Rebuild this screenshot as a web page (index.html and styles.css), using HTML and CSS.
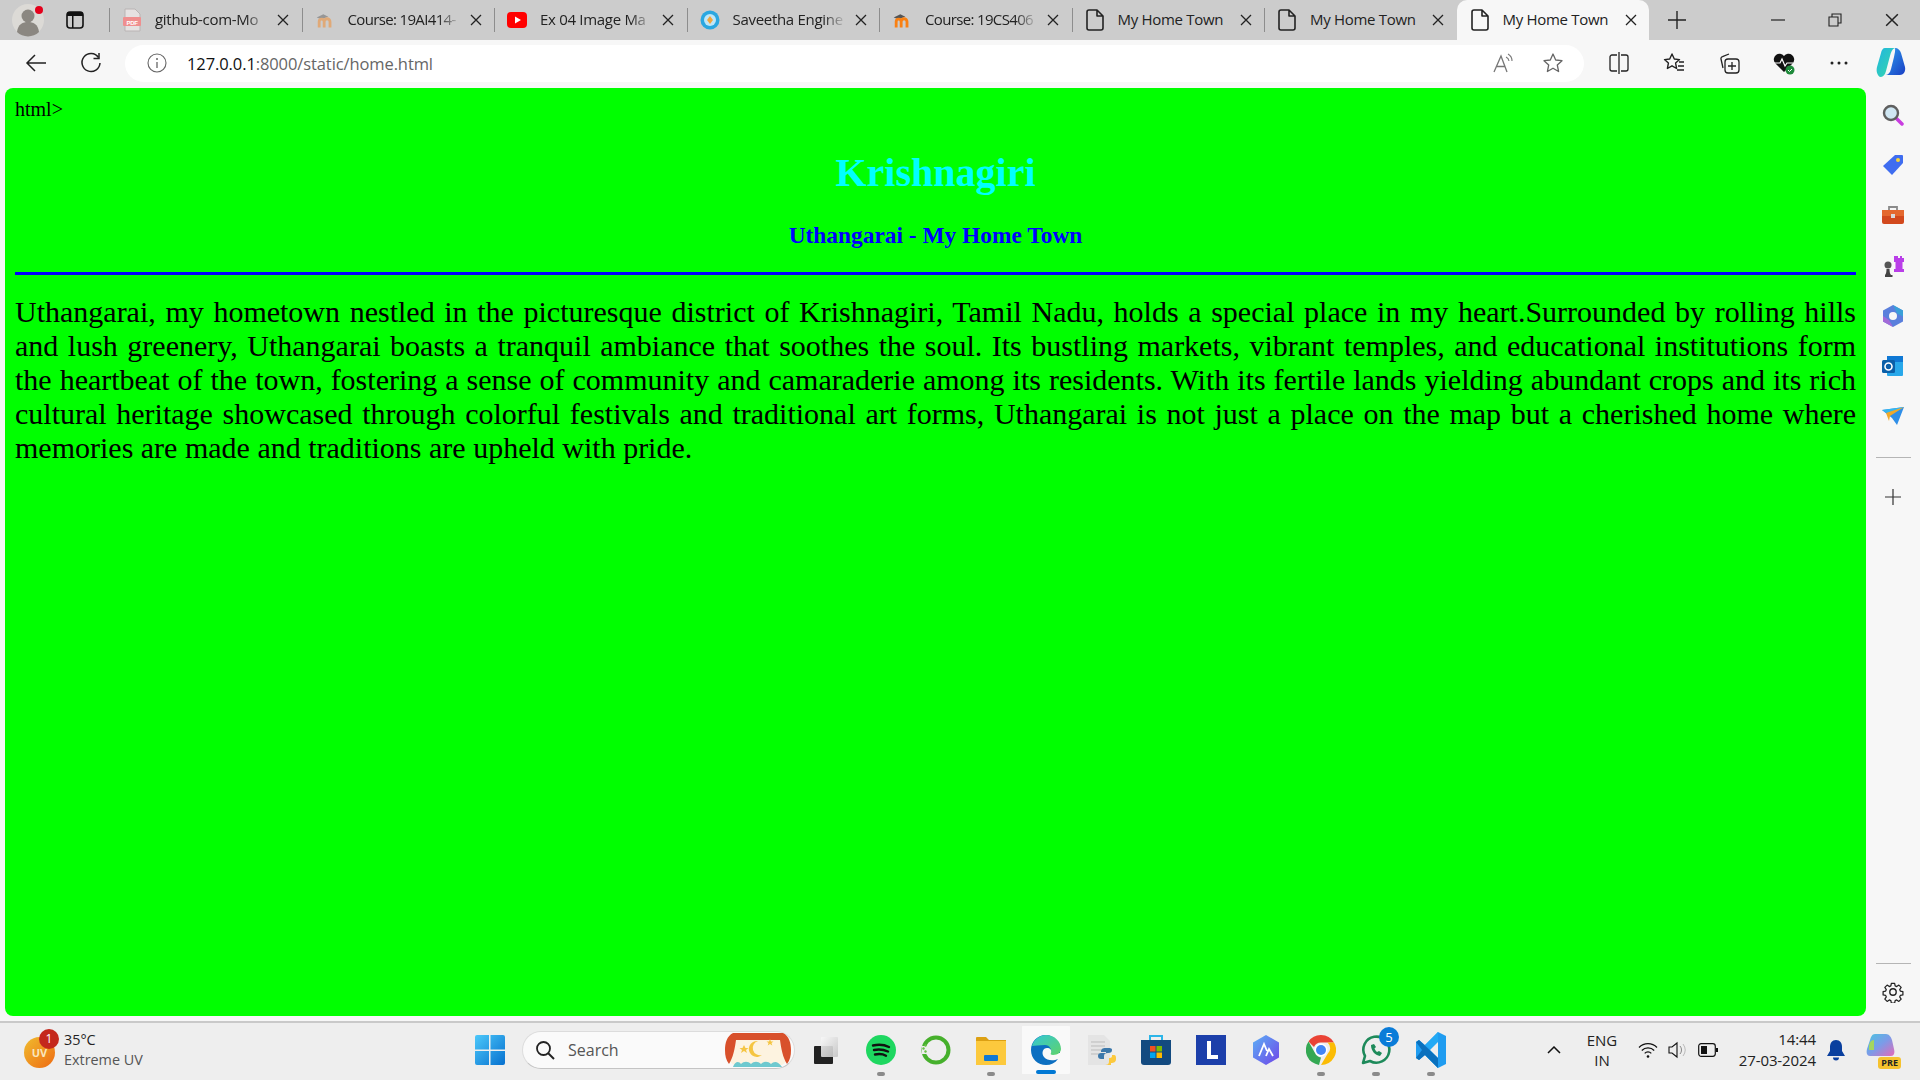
FILE: index.html
```html
<!DOCTYPE html>
<html>
<head>
    <meta charset="utf-8"/>
    <title>My Home Town</title>
    <link rel="stylesheet" href="styles.css">
</head>
<body>

<svg class="defs" width="0" height="0">
    <symbol id="doc" viewBox="0 0 20 24"><path d="M4 2h8l6 6v12a2 2 0 0 1-2 2H4a2 2 0 0 1-2-2V4a2 2 0 0 1 2-2zM12 2v6h6" fill="none" stroke="#222" stroke-width="1.6" stroke-linejoin="round"/></symbol>
    <symbol id="close" viewBox="0 0 12 12"><path d="M1 1l10 10M11 1L1 11" stroke="#222" stroke-width="1.3" fill="none"/></symbol>
    <symbol id="moodle" viewBox="0 0 24 24"><path d="M2 9l8-4 6 3-8 3z" fill="#555"/><path d="M5 21v-7a3 3 0 0 1 6 0v7M11 21v-7a3.500 3.500 0 0 1 7 0v7" fill="none" stroke="#f98012" stroke-width="3.400"/></symbol>
</svg>

<div class="tabstrip">
    <div class="profile">
        <svg width="34" height="34" viewBox="0 0 34 34"><circle cx="17" cy="17" r="16" fill="#dcdad6"/><circle cx="17" cy="13" r="6.500" fill="#8b8781"/><path d="M6 29c1-8 6-10 11-10s10 2 11 10a16 16 0 0 1-22 0z" fill="#8b8781"/></svg>
        <span class="profile-dot"></span>
    </div>
    <div class="tab-actions">
        <svg width="20" height="20" viewBox="0 0 20 20"><rect x="2" y="2" width="16" height="16" rx="3" fill="none" stroke="#111" stroke-width="1.600"/><path d="M2 6h16V4a2 2 0 0 0-2-2H4a2 2 0 0 0-2 2zM7 6h1.500v12H7z" fill="#111"/></svg>
    </div>

    <div class="tab first-tab">
        <svg class="tab-icon" width="20" height="24" viewBox="0 0 20 24"><path d="M3 1h10l5 5v17H3z" fill="#e6e2e2" stroke="#b9b4b4"/><rect x="1" y="9" width="18" height="9" rx="1" fill="#ef8f8f"/><text x="10" y="16.500" class="pdf-label">PDF</text></svg>
        <span class="tab-title">github-com-Mo</span>
        <svg class="tab-close" width="12" height="12"><use href="#close"/></svg>
    </div>
    <div class="tab">
        <svg class="tab-icon faded" width="20" height="20"><use href="#moodle"/></svg>
        <span class="tab-title tight">Course: 19AI414-</span>
        <svg class="tab-close" width="12" height="12"><use href="#close"/></svg>
    </div>
    <div class="tab">
        <svg class="tab-icon" width="20" height="16" viewBox="0 0 20 16"><rect width="20" height="16" rx="4" fill="#f00"/><path d="M8 4.500l6 3.500-6 3.500z" fill="#fff"/></svg>
        <span class="tab-title">Ex 04 Image Ma</span>
        <svg class="tab-close" width="12" height="12"><use href="#close"/></svg>
    </div>
    <div class="tab">
        <svg class="tab-icon" width="20" height="20" viewBox="0 0 20 20"><circle cx="10" cy="10" r="9.500" fill="#2aa7e0"/><circle cx="10" cy="10" r="6" fill="#bfe6f7"/><path d="M10 6l3 4-3 4-3-4z" fill="#f2a63b"/></svg>
        <span class="tab-title">Saveetha Engine</span>
        <svg class="tab-close" width="12" height="12"><use href="#close"/></svg>
    </div>
    <div class="tab">
        <svg class="tab-icon" width="20" height="20"><use href="#moodle"/></svg>
        <span class="tab-title tight">Course: 19CS406</span>
        <svg class="tab-close" width="12" height="12"><use href="#close"/></svg>
    </div>
    <div class="tab">
        <svg class="tab-icon" width="20" height="24"><use href="#doc"/></svg>
        <span class="tab-title solid">My Home Town</span>
        <svg class="tab-close" width="12" height="12"><use href="#close"/></svg>
    </div>
    <div class="tab">
        <svg class="tab-icon" width="20" height="24"><use href="#doc"/></svg>
        <span class="tab-title solid">My Home Town</span>
        <svg class="tab-close" width="12" height="12"><use href="#close"/></svg>
    </div>
    <div class="tab active">
        <svg class="tab-icon" width="20" height="24"><use href="#doc"/></svg>
        <span class="tab-title solid">My Home Town</span>
        <svg class="tab-close" width="12" height="12"><use href="#close"/></svg>
    </div>

    <div class="new-tab">
        <svg width="18" height="18" viewBox="0 0 18 18"><path d="M9 0v18M0 9h18" stroke="#222" stroke-width="1.400"/></svg>
    </div>

    <div class="window-controls">
        <div class="win-btn"><svg width="14" height="14" viewBox="0 0 14 14"><path d="M0 7h14" stroke="#222" stroke-width="1.200"/></svg></div>
        <div class="win-btn"><svg width="14" height="14" viewBox="0 0 14 14"><path d="M1 4h9v9H1zM4 4V1h9v9h-3" fill="none" stroke="#222" stroke-width="1.100"/></svg></div>
        <div class="win-btn"><svg width="14" height="14"><use href="#close"/></svg></div>
    </div>
</div>

<div class="toolbar">
    <div class="tool">
        <svg width="22" height="22" viewBox="0 0 22 22"><path d="M21 11H2M10 3l-8 8 8 8" fill="none" stroke="#222" stroke-width="1.500"/></svg>
    </div>
    <div class="tool">
        <svg width="22" height="22" viewBox="0 0 22 22"><path d="M18.500 5.500A9 9 0 1 0 20 11" fill="none" stroke="#222" stroke-width="1.500"/><path d="M19 1v5.500h-5.500" fill="none" stroke="#222" stroke-width="1.500"/></svg>
    </div>

    <div class="address">
        <div class="addr-info">
            <svg width="20" height="20" viewBox="0 0 20 20"><circle cx="10" cy="10" r="9" fill="none" stroke="#666" stroke-width="1.100"/><path d="M10 9v6" stroke="#666" stroke-width="1.300"/><circle cx="10" cy="6" r="1" fill="#666"/></svg>
        </div>
        <div class="url"><span class="host">127.0.0.1</span>:8000/static/home.html</div>
        <div class="addr-tool">
            <svg width="22" height="22" viewBox="0 0 22 22"><path d="M1 20L8 4l6 16M3.500 14.500h9" fill="none" stroke="#777" stroke-width="1.300"/><path d="M13 5a5 5 0 0 1 3 4M15 2a8 8 0 0 1 4 7" fill="none" stroke="#777" stroke-width="1.100"/></svg>
        </div>
        <div class="addr-tool">
            <svg width="22" height="22" viewBox="0 0 22 22"><path d="M11 2l2.700 6 6.300.7-4.700 4.300 1.300 6.500-5.600-3.300-5.600 3.300 1.300-6.500L2 8.700 8.300 8z" fill="none" stroke="#666" stroke-width="1.300" stroke-linejoin="round"/></svg>
        </div>
    </div>

    <div class="tool first-right">
        <svg width="22" height="22" viewBox="0 0 22 22"><path d="M9 3H4a2 2 0 0 0-2 2v12a2 2 0 0 0 2 2h5M13 3h5a2 2 0 0 1 2 2v12a2 2 0 0 1-2 2h-5M11 0v22" fill="none" stroke="#222" stroke-width="1.300"/></svg>
    </div>
    <div class="tool">
        <svg width="24" height="24" viewBox="0 0 24 24"><path d="M10 3l2.300 5 5.200.6-3.900 3.500 1 5.400-4.600-2.700-4.600 2.700 1-5.400L2.500 8.600 7.700 8z" fill="none" stroke="#222" stroke-width="1.400" stroke-linejoin="round"/><path d="M17 11h5M16 15h6M15 19h7" stroke="#222" stroke-width="1.300"/></svg>
    </div>
    <div class="tool">
        <svg width="24" height="24" viewBox="0 0 24 24"><path d="M6 17l-2-9a2 2 0 0 1 1.500-2.400L12 3" fill="none" stroke="#222" stroke-width="1.300"/><rect x="8" y="8" width="14" height="14" rx="3" fill="none" stroke="#222" stroke-width="1.300"/><path d="M15 11v8M11 15h8" stroke="#222" stroke-width="1.300"/></svg>
    </div>
    <div class="tool">
        <svg width="24" height="24" viewBox="0 0 24 24"><path d="M12 21L3 12a5.500 5.500 0 0 1 9-7 5.500 5.500 0 0 1 9 7z" fill="#111"/><path d="M2 12h6l2-4 3 7 2-3h6" fill="none" stroke="#fff" stroke-width="1.200"/><circle cx="18" cy="19" r="4.500" fill="#1f8a3b"/><path d="M16 19l1.500 1.500L20 18" fill="none" stroke="#fff"/></svg>
    </div>
    <div class="tool">
        <svg width="18" height="4" viewBox="0 0 18 4"><circle cx="2" cy="2" r="1.500" fill="#222"/><circle cx="9" cy="2" r="1.500" fill="#222"/><circle cx="16" cy="2" r="1.500" fill="#222"/></svg>
    </div>
    <div class="tool copilot">
        <svg width="30" height="32" viewBox="0 0 30 32"><defs><linearGradient id="copA" x1="0" y1="0" x2="1" y2="1"><stop offset="0" stop-color="#1fb6e0"/><stop offset="1" stop-color="#3ad9a8"/></linearGradient><linearGradient id="copB" x1="0" y1="0" x2="1" y2="1"><stop offset="0" stop-color="#2fa0f0"/><stop offset="1" stop-color="#1a3fc4"/></linearGradient></defs><path d="M9 1h10c-3 1-4 4-5 8l-4 15c-1 4-3 6-6 6-3-2-4-6-3-10L5 6c.5-3 2-5 4-5z" fill="url(#copA)"/><path d="M19 1c3 0 5 2 6 5l4 14c1 5-2 8-5 8H9c3 0 5-2 6-6l3-12c.7-3 1.500-7 1-9z" fill="url(#copB)"/></svg>
    </div>
</div>

<div class="middle">
    <div class="page">
        html&gt;
        <h1 class="town">Krishnagiri</h1>
        <h3 class="subtitle">Uthangarai - My Home Town</h3>
        <hr class="rule">
        <p class="about">Uthangarai, my hometown nestled in the picturesque district of Krishnagiri, Tamil Nadu, holds a special place in my heart.Surrounded by rolling hills and lush greenery, Uthangarai boasts a tranquil ambiance that soothes the soul. Its bustling markets, vibrant temples, and educational institutions form the heartbeat of the town, fostering a sense of community and camaraderie among its residents. With its fertile lands yielding abundant crops and its rich cultural heritage showcased through colorful festivals and traditional art forms, Uthangarai is not just a place on the map but a cherished home where memories are made and traditions are upheld with pride.</p>
    </div>

    <div class="sidebar">
        <div class="side-item">
            <svg width="22" height="22" viewBox="0 0 22 22"><path d="M13 13l7 7" stroke="#c93de0" stroke-width="3.500" stroke-linecap="round"/><circle cx="9" cy="9" r="7" fill="#cfe6f2" stroke="#5f5f5f" stroke-width="2.400"/></svg>
        </div>
        <div class="side-item">
            <svg width="22" height="22" viewBox="0 0 22 22"><path d="M13 1h7a1 1 0 0 1 1 1v7L10 21 1 12z" fill="#3f6df0"/><circle cx="16" cy="6" r="2" fill="#f5d33c"/></svg>
        </div>
        <div class="side-item">
            <svg width="24" height="22" viewBox="0 0 24 22"><path d="M8 6V3h8v3" fill="none" stroke="#8a8a8a" stroke-width="1.800"/><rect x="1" y="6" width="22" height="14" rx="2" fill="#d2491d"/><rect x="1" y="6" width="22" height="6" fill="#e4682e"/><rect x="10" y="10" width="4" height="4" fill="#d9d9d9"/></svg>
        </div>
        <div class="side-item">
            <svg width="24" height="24" viewBox="0 0 24 24"><path d="M15 2h2v2h2V2h2v2h2v4h-1.500v7H23v3H13v-3h1.500V8H13V2z" fill="#b93ee8"/><circle cx="7" cy="11" r="3.500" fill="#555"/><path d="M4 23v-2c1-1 1.500-3 1.500-6h3c0 3 .5 5 1.500 6h1.500v2z" fill="#444"/></svg>
        </div>
        <div class="side-item">
            <svg width="22" height="24" viewBox="0 0 22 24"><path d="M11 1l10 5.500v11L11 23 1 17.500v-11z" fill="#5a7fdc"/><path d="M11 1l10 5.500v6l-6-3z" fill="#3aa0d8"/><path d="M1 12l6 4 4 7-10-5.500z" fill="#a36ad8"/><circle cx="11" cy="12" r="4" fill="#f7f7f7"/></svg>
        </div>
        <div class="side-item">
            <svg width="22" height="22" viewBox="0 0 22 22"><rect x="5" y="1" width="16" height="20" rx="1" fill="#28a8ea"/><rect x="5" y="1" width="16" height="6" fill="#0f78d4"/><rect x="0" y="5" width="13" height="13" rx="1.500" fill="#0a5fa8"/><circle cx="6.500" cy="11.500" r="3.500" fill="none" stroke="#fff" stroke-width="1.600"/></svg>
        </div>
        <div class="side-item">
            <svg width="24" height="18" viewBox="0 0 24 18"><path d="M1 3l22-3-7 18-5-7z" fill="#2f8fe8"/><path d="M1 3l22-3L9 8z" fill="#35b6f0"/><path d="M5 6l18-6L9 9 8 14z" fill="#f0a92b"/></svg>
        </div>
        <div class="side-rule"></div>
        <div class="side-item">
            <svg width="16" height="16" viewBox="0 0 16 16"><path d="M8 0v16M0 8h16" stroke="#333" stroke-width="1.200"/></svg>
        </div>
        <div class="side-spacer"></div>
        <div class="side-rule low"></div>
        <div class="side-item">
            <svg width="22" height="22" viewBox="0 0 24 24"><path d="M10 1.500h4l.6 3.100 1.900.8 2.600-1.800 2.800 2.800-1.800 2.600.8 1.900 3.100.6v4l-3.100.6-.8 1.900 1.800 2.600-2.800 2.800-2.600-1.800-1.900.8-.6 3.100h-4l-.6-3.100-1.900-.8-2.600 1.800-2.800-2.800 1.800-2.600-.8-1.900-3.100-.6v-4l3.100-.6.8-1.900-1.800-2.600 2.800-2.800 2.600 1.800 1.900-.8z" transform="translate(1.200 1.200) scale(.9)" fill="none" stroke="#222" stroke-width="1.500" stroke-linejoin="round"/><circle cx="12" cy="12" r="3.500" fill="none" stroke="#222" stroke-width="1.500"/></svg>
        </div>
    </div>
</div>

<div class="taskbar">
    <div class="weather">
        <div class="uv">
            <span class="uv-label">UV</span>
            <span class="uv-badge">1</span>
        </div>
        <div class="weather-text">
            <div class="temp">35°C</div>
            <div class="cond">Extreme UV</div>
        </div>
    </div>

    <div class="task-icon">
        <svg width="30" height="30" viewBox="0 0 30 30"><defs><linearGradient id="winGrad" x1="0" y1="0" x2="1" y2="1"><stop offset="0" stop-color="#4cc8fa"/><stop offset="1" stop-color="#0670cf"/></linearGradient></defs><path d="M0 2a2 2 0 0 1 2-2h12v14.500H0zM15.500 0H28a2 2 0 0 1 2 2v12.500H15.500zM0 16h14v14H2a2 2 0 0 1-2-2zM15.500 16H30v12a2 2 0 0 1-2 2H15.500z" fill="url(#winGrad)"/></svg>
    </div>

    <div class="search">
        <svg width="20" height="20" viewBox="0 0 20 20"><circle cx="8.500" cy="8.500" r="6.500" fill="none" stroke="#222" stroke-width="1.800"/><path d="M13 13l6 6" stroke="#222" stroke-width="2"/></svg>
        <span class="search-label">Search</span>
        <svg width="66" height="34" viewBox="0 0 66 34"><rect width="66" height="34" rx="17" fill="#fdf3e0"/><path d="M8 0h50c6 3 8 10 8 17 0 6-1 10-4 14-4-6-6-16-7-24H11c-1 8-3 18-7 24-3-4-4-8-4-14C0 10 2 3 8 0z" fill="#d8502b"/><path d="M8 34c2-6 6-6 8-3 3-3 7-3 10 0 3-3 7-3 10 0 3-3 7-3 10 0 3-3 7-3 11 3z" fill="#6fc9cf"/><path d="M33 8a8 8 0 1 0 4 14 7 7 0 0 1-4-14z" fill="#f5c542"/><path d="M19 12l1.500 3h3l-2.500 2 1 3-3-2-3 2 1-3-2.500-2h3zM45 6l1 2.500h2.500l-2 1.500.8 2.500-2.300-1.500-2.300 1.500.8-2.500-2-1.500H44z" fill="#f5c542"/></svg>
    </div>

    <div class="task-icon after-search">
        <svg width="24" height="28" viewBox="0 0 24 28"><defs><linearGradient id="tvGrad" x1="0" y1="0" x2="1" y2="1"><stop offset="0" stop-color="#f8f8f8"/><stop offset="1" stop-color="#c4c4c4"/></linearGradient></defs><rect x="0" y="10" width="19" height="18" rx="1" fill="#222"/><rect x="7" y="1" width="17" height="20" rx="1" fill="url(#tvGrad)" opacity=".9"/></svg>
    </div>
    <div class="task-icon running">
        <svg width="30" height="30" viewBox="0 0 30 30"><circle cx="15" cy="15" r="15" fill="#1ed760"/><path d="M7 10.500c6-1.500 11-1 16 1.500M8 15c5-1 9-.8 14 1.500M9 19.500c4-.8 8-.5 11 1.200" fill="none" stroke="#111" stroke-width="2.400" stroke-linecap="round"/></svg>
    </div>
    <div class="task-icon">
        <svg width="30" height="30" viewBox="0 0 30 30"><circle cx="15" cy="15" r="12.500" fill="none" stroke="#46b02c" stroke-width="4"/><path d="M1 11h5v8H1z" fill="#eee"/><path d="M2 12l2 1-1 2-2-1zM4 15l2 1-1 2-2-1zM4 9l2 1-1 2-2-1z" fill="#6cc24a"/></svg>
    </div>
    <div class="task-icon running">
        <svg width="30" height="30" viewBox="0 0 30 30"><path d="M0 3a1 1 0 0 1 1-1h9l3 3h17v8H0z" fill="#dca013"/><rect y="6" width="30" height="24" fill="#fcc93d"/><rect x="8" y="20" width="14" height="6" rx="1" fill="#0f78d4"/></svg>
    </div>
    <div class="task-icon current">
        <svg width="32" height="32" viewBox="0 0 32 32"><defs><linearGradient id="edgeGrad" x1="0" y1="0" x2="1" y2="1"><stop offset="0" stop-color="#33c6d6"/><stop offset="1" stop-color="#5fd36a"/></linearGradient></defs><path d="M16 1C7 1 1 8 1 16c0 9 7 15 15 15 5 0 9-2 12-6-4 2-11 2-14-2-3-4-1-9 3-9 3 0 5 2 5 5h8c1-10-6-18-14-18z" fill="#0c6fc1"/><path d="M2 12C4 5 10 1 16 1c9 0 15 7 15 14 0 3-3 6-8 6-2 0-3-1-2-2 1-3-1-8-6-8-6 0-10 1-13 1z" fill="url(#edgeGrad)"/></svg>
        <span class="run-mark"></span>
    </div>
    <div class="task-icon">
        <svg width="30" height="32" viewBox="0 0 30 32"><path d="M2 1h16l6 6v24H2z" fill="#e4e4e4"/><path d="M5 8h14M5 12h14M5 16h10M5 20h8" stroke="#bbb"/><path d="M20 14c-4 0-5 1-5 4h5v1h-5c-2 0-3 1-3 3s1 3 3 3h3v-3c0-2 1-3 4-3s4-1 4-3-2-2-6-2z" fill="#3c78aa"/><path d="M18 31c4 0 5-1 5-4v-3c3 0 3-1 3-3h2c2 0 2 2 2 4 0 3-2 4-5 4v2h-7z" fill="#fcc93d"/></svg>
    </div>
    <div class="task-icon">
        <svg width="30" height="32" viewBox="0 0 30 32"><path d="M9 7V2h12v5" fill="none" stroke="#2cb5e8" stroke-width="2"/><path d="M0 6h30v22a3 3 0 0 1-3 3H3a3 3 0 0 1-3-3z" fill="#134a80"/><rect x="9" y="12" width="5.500" height="5.500" fill="#f25022"/><rect x="15.500" y="12" width="5.500" height="5.500" fill="#7fba00"/><rect x="9" y="18.500" width="5.500" height="5.500" fill="#00a4ef"/><rect x="15.500" y="18.500" width="5.500" height="5.500" fill="#ffb900"/></svg>
    </div>
    <div class="task-icon">
        <svg width="30" height="30" viewBox="0 0 30 30"><rect width="30" height="30" fill="#1c3faa"/><path d="M11 6h4v14h7v4H11z" fill="#fff"/></svg>
    </div>
    <div class="task-icon">
        <svg width="30" height="32" viewBox="0 0 30 32"><defs><linearGradient id="hexGrad" x1="0" y1="0" x2="1" y2="1"><stop offset="0" stop-color="#5bb0f5"/><stop offset="1" stop-color="#6f45e8"/></linearGradient></defs><path d="M15 1l13 7.500v15L15 31 2 23.500v-15z" fill="url(#hexGrad)"/><path d="M8 22l5-12 3 7M15 22l3-7 4 7" fill="none" stroke="#fff" stroke-width="1.800"/></svg>
    </div>
    <div class="task-icon running">
        <svg width="30" height="30" viewBox="0 0 30 30"><path d="M15 0a15 15 0 0 1 13 7.500H15a7.500 7.500 0 0 0-7 4.500L2.500 6.500A15 15 0 0 1 15 0z" fill="#ea4335"/><path d="M28 7.500A15 15 0 0 1 15 30l6.500-11a7.500 7.500 0 0 0 0-11.500z" fill="#fbbc05"/><path d="M2.500 6.500L9 18a7.500 7.500 0 0 0 6 4.500l-2 7.400A15 15 0 0 1 2.500 6.500z" fill="#34a853"/><circle cx="15" cy="15" r="6.500" fill="#fff"/><circle cx="15" cy="15" r="5" fill="#4285f4"/></svg>
    </div>
    <div class="task-icon running">
        <svg width="32" height="32" viewBox="0 0 32 32"><path d="M3 29l2-7a13 13 0 1 1 5 5z" fill="none" stroke="#1d8a5a" stroke-width="2.600" stroke-linejoin="round"/><path d="M11 11c0 6 4 10 9 11l2-3-3-2-2 1c-1-1-2-2-2.500-3.500l1.500-1.500-2-3z" fill="#1d8a5a"/></svg>
        <span class="count-badge">5</span>
    </div>
    <div class="task-icon running">
        <svg width="30" height="36" viewBox="0 0 30 36"><path d="M22 0l8 4v28l-8 4-13-13-6 5-3-2v-16l3-2 6 5z" fill="#1f9cf0"/><path d="M22 0v36l-13-13 6-5-6-5z" fill="#22a9f5"/><path d="M22 10l-8 8 8 8z" fill="#eee"/><path d="M0 10l3-2 19 18v10L9 23l-6 5-3-2 6-8z" fill="#0a70bd"/></svg>
    </div>

    <div class="tray">
        <div class="tray-chevron">
            <svg width="14" height="8" viewBox="0 0 14 8"><path d="M1 7l6-6 6 6" fill="none" stroke="#111" stroke-width="1.500"/></svg>
        </div>
        <div class="lang"><div>ENG</div><div>IN</div></div>
        <div class="tray-icon first-tray">
            <svg width="20" height="16" viewBox="0 0 20 16"><path d="M1 5.500a12.500 12.500 0 0 1 18 0M3.800 8.500a8.500 8.500 0 0 1 12.400 0M6.700 11.300a4.500 4.500 0 0 1 6.600 0" fill="none" stroke="#111" stroke-width="1.200"/><circle cx="10" cy="14.500" r="1.300" fill="#111"/></svg>
        </div>
        <div class="tray-icon">
            <svg width="20" height="18" viewBox="0 0 20 18"><path d="M1 6h3l5-4v14l-5-4H1z" fill="none" stroke="#111" stroke-width="1.100"/><path d="M12 5a6 6 0 0 1 0 8" fill="none" stroke="#888"/><path d="M15 3a10 10 0 0 1 0 12" fill="none" stroke="#bbb"/></svg>
        </div>
        <div class="tray-icon">
            <svg width="20" height="14" viewBox="0 0 20 14"><rect x=".7" y=".7" width="16.600" height="12.600" rx="2.500" fill="none" stroke="#111" stroke-width="1.200"/><rect x="3" y="3" width="6" height="8" fill="#111"/><rect x="18" y="5" width="2" height="4" fill="#111"/></svg>
        </div>
        <div class="clock"><div>14:44</div><div>27-03-2024</div></div>
        <div class="tray-bell">
            <svg width="18" height="22" viewBox="0 0 18 22"><path d="M9 1c-4 0-6 3-6 7v4l-3 5h18l-3-5V8c0-4-2-7-6-7z" fill="#0a3f9e"/><path d="M6 18.500a3 3 0 0 0 6 0z" fill="#0a3f9e"/></svg>
        </div>
        <div class="tray-copilot">
            <svg width="30" height="34" viewBox="0 0 30 34"><defs><linearGradient id="preGrad" x1="0" y1="0" x2="1" y2="1"><stop offset="0" stop-color="#4ac4e0"/><stop offset=".5" stop-color="#7c9be8"/><stop offset="1" stop-color="#e46ab8"/></linearGradient></defs><path d="M9 1h11c3 0 5 3 6 6l2 9c1 4 0 7-3 7H4c-3 0-4-3-3-7l3-9c1-3 2-6 5-6z" fill="url(#preGrad)"/><path d="M3 14c0-4 2-7 5-7v10H3z" fill="#a4d65e"/></svg>
            <span class="pre-badge">PRE</span>
        </div>
    </div>
</div>

</body>
</html>
```

FILE: styles.css
```css
* {
    box-sizing: border-box;
}

html, body {
    margin: 0;
    height: 100%;
    overflow: hidden;
}

body {
    display: flex;
    flex-direction: column;
    height: 1080px;
    background: #f7f7f7;
    font-family: "Open Sans", "Noto Sans", sans-serif;
    color: #222;
}

.defs {
    display: block;
    height: 0;
}

/* tab strip */

.tabstrip {
    display: flex;
    flex: none;
    align-items: stretch;
    height: 40px;
    background: #cccccc;
}

.profile {
    position: relative;
    display: flex;
    align-items: center;
    justify-content: center;
    width: 56px;
}

.profile-dot {
    position: absolute;
    top: 6px;
    left: 35px;
    width: 8px;
    height: 8px;
    border-radius: 50%;
    background: #e4001b;
}

.tab-actions {
    display: flex;
    align-items: center;
    justify-content: center;
    width: 38px;
}

.tab {
    display: flex;
    align-items: center;
    width: 192.5px;
    font-size: 15px;
    letter-spacing: -0.3px;
}

.first-tab {
    margin-left: 15px;
}

.tab::before {
    content: "";
    flex: none;
    width: 1px;
    height: 24px;
    background: #8d8d8d;
}

.tab.active {
    background: #f7f7f7;
    border-radius: 10px 10px 0 0;
}

.tab.active::before {
    background: transparent;
}

.tab-icon {
    flex: none;
    margin-left: 12px;
    margin-right: 13px;
}

.tab-icon.faded {
    opacity: 0.45;
}

.pdf-label {
    font-family: "Liberation Sans", sans-serif;
    font-size: 6px;
    font-weight: bold;
    fill: #fff;
    text-anchor: middle;
}

.tab-title {
    flex: none;
    width: 110px;
    padding-bottom: 2px;
    overflow: hidden;
    white-space: nowrap;
    -webkit-mask-image: linear-gradient(to right, #000 82%, rgba(0, 0, 0, 0.15));
    mask-image: linear-gradient(to right, #000 82%, rgba(0, 0, 0, 0.15));
}

.tab-title.tight {
    letter-spacing: -0.65px;
}

.tab-title.solid {
    -webkit-mask-image: none;
    mask-image: none;
}

.tab-close {
    flex: none;
    margin-left: 12px;
}

.new-tab {
    display: flex;
    align-items: center;
    justify-content: center;
    width: 56px;
}

.window-controls {
    display: flex;
    margin-left: auto;
}

.win-btn {
    display: flex;
    align-items: center;
    justify-content: center;
    width: 57px;
}

/* address bar row */

.toolbar {
    display: flex;
    flex: none;
    align-items: center;
    height: 48px;
    padding-left: 8px;
    padding-bottom: 2px;
}

.tool {
    display: flex;
    flex: none;
    align-items: center;
    justify-content: center;
    width: 55px;
    height: 37px;
}

.first-right {
    margin-left: 7px;
}

.copilot {
    width: 50px;
}

.address {
    display: flex;
    align-items: center;
    width: 1459px;
    height: 37px;
    margin-left: 7px;
    padding-left: 20px;
    padding-right: 7px;
    border-radius: 19px;
    background: #fff;
}

.addr-info {
    display: flex;
    justify-content: center;
    width: 24px;
}

.url {
    flex: 1;
    margin-left: 18px;
    font-size: 16.5px;
    letter-spacing: -0.1px;
    color: #666;
}

.host {
    color: #111;
}

.addr-tool {
    display: flex;
    justify-content: center;
    width: 49px;
}

/* page and sidebar */

.middle {
    display: flex;
    flex: 1;
    min-height: 0;
}

.page {
    width: 1861px;
    height: 928px;
    margin-left: 5px;
    padding: 10px 10px 8px 10px;
    border-radius: 8px;
    background: #00ff00;
    color: #000;
    font-family: "Liberation Serif", "Times New Roman", serif;
    font-size: 20px;
}

.town {
    margin: 28px 0 0 0;
    color: #00ffff;
    font-size: 40px;
    font-weight: bold;
    text-align: center;
}

.subtitle {
    margin: 26px 0 0 0;
    color: #0000ff;
    font-size: 23.4px;
    font-weight: bold;
    text-align: center;
}

.rule {
    height: 3px;
    margin: 23px 0 0 0;
    border: none;
    background: #0000ff;
}

.about {
    margin: 20px 0 0 0;
    font-size: 30px;
    line-height: 34px;
    text-align: justify;
}

.sidebar {
    display: flex;
    flex: 1;
    flex-direction: column;
    align-items: center;
    padding-top: 1.5px;
    padding-bottom: 4px;
}

.side-item {
    display: flex;
    flex: none;
    align-items: center;
    justify-content: center;
    width: 100%;
    height: 50.3px;
}

.side-rule {
    flex: none;
    width: 35px;
    height: 1px;
    margin: 15px 0 14px;
    background: #b5b5b5;
}

.side-rule.low {
    margin: 0 0 3px;
}

.side-spacer {
    flex: 1;
}

/* taskbar */

.taskbar {
    display: flex;
    flex: none;
    align-items: center;
    height: 59px;
    padding-bottom: 3px;
    border-top: 2px solid #c9c9c9;
    background: #eeeeee;
}

.weather {
    display: flex;
    flex: none;
    align-items: center;
    width: 462px;
    padding-left: 24px;
}

.uv {
    position: relative;
    display: flex;
    align-items: center;
    justify-content: center;
    width: 31px;
    height: 31px;
    margin-top: 4px;
    border-radius: 50%;
    background: linear-gradient(135deg, #f0bc2e, #ee6a12);
}

.uv-label {
    color: #f9e6bc;
    font-size: 11px;
    font-weight: bold;
}

.uv-badge {
    position: absolute;
    top: -8px;
    right: -4px;
    width: 20px;
    height: 20px;
    border-radius: 50%;
    background: #c4281c;
    color: #fff;
    font-size: 12px;
    line-height: 20px;
    text-align: center;
}

.weather-text {
    margin-left: 9px;
    font-size: 14.4px;
    line-height: 20px;
}

.cond {
    color: #555;
}

.task-icon {
    position: relative;
    display: flex;
    flex: none;
    align-items: center;
    justify-content: center;
    width: 55px;
    height: 48px;
}

.after-search {
    margin-left: 3px;
}

.running::after {
    content: "";
    position: absolute;
    left: 24px;
    bottom: -2px;
    width: 8px;
    height: 4px;
    border-radius: 2px;
    background: #8a8a8a;
}

.current {
    border-radius: 5px;
    background: linear-gradient(#f9f9f9, #f9f9f9) center / 48px 100% no-repeat;
}

.run-mark {
    position: absolute;
    left: 18px;
    bottom: 0;
    width: 20px;
    height: 4px;
    border-radius: 2px;
    background: #0078d4;
}

.count-badge {
    position: absolute;
    top: 1px;
    right: 4px;
    width: 20px;
    height: 20px;
    border-radius: 50%;
    background: #0a7cd8;
    color: #fff;
    font-size: 13px;
    line-height: 20px;
    text-align: center;
}

.search {
    display: flex;
    flex: none;
    align-items: center;
    width: 273px;
    height: 38px;
    margin-left: 5px;
    padding-left: 12px;
    padding-right: 3px;
    border: 1px solid #dcdcdc;
    border-bottom-color: #c4c4c4;
    border-radius: 19px;
    background: #fafafa;
}

.search-label {
    flex: 1;
    margin-left: 13px;
    color: #555;
    font-size: 16px;
}

.tray {
    display: flex;
    flex: 1;
    align-items: center;
    padding-left: 76px;
}

.tray-chevron {
    display: flex;
    justify-content: center;
    width: 40px;
}

.lang {
    width: 50px;
    margin-left: 3px;
    font-size: 15px;
    line-height: 20px;
    text-align: center;
}

.tray-icon {
    display: flex;
    justify-content: center;
    width: 30px;
}

.first-tray {
    margin-left: 6px;
}

.clock {
    width: 93px;
    font-size: 15px;
    line-height: 21px;
    letter-spacing: -0.1px;
    text-align: right;
}

.tray-bell {
    display: flex;
    justify-content: center;
    width: 30px;
    margin-left: 5px;
}

.tray-copilot {
    position: relative;
    display: flex;
    justify-content: center;
    width: 50px;
    margin-left: 5px;
}

.pre-badge {
    position: absolute;
    right: 5px;
    bottom: -2px;
    padding: 0 3px;
    border-radius: 3px;
    background: #f6c22e;
    color: #222;
    font-size: 9px;
    font-weight: bold;
    line-height: 12px;
}
```
